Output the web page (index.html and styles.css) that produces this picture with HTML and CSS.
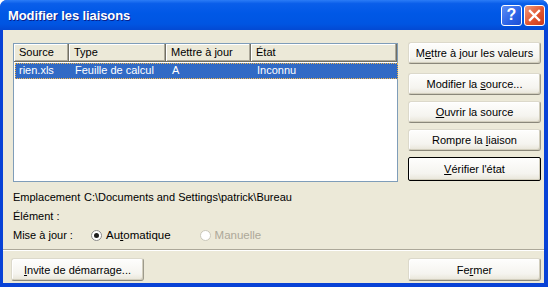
FILE: index.html
```html
<!DOCTYPE html>
<html lang="fr">
<head>
    <meta charset="UTF-8">
    <title>Modifier les liaisons</title>
    <link rel="stylesheet" href="styles.css">
</head>
<body>
<div class="window">
    <div class="titlebar">
        <span class="title">Modifier les liaisons</span>
        <div class="controls">
            <span class="ctl help">?</span>
            <span class="ctl close">
                <svg width="13" height="13" viewBox="0 0 13 13"><path d="M2 2 L11 11 M11 2 L2 11" stroke="#fff" stroke-width="2.4" stroke-linecap="square"/></svg>
            </span>
        </div>
    </div>
    <div class="client">
        <div class="top">
            <div class="list">
                <div class="list-head">
                    <span class="col c1">Source</span>
                    <span class="col c2">Type</span>
                    <span class="col c3">Mettre à jour</span>
                    <span class="col c4">État</span>
                </div>
                <div class="row selected">
                    <span class="cell c1">rien.xls</span>
                    <span class="cell c2">Feuille de calcul</span>
                    <span class="cell c3">A</span>
                    <span class="cell c4">Inconnu</span>
                </div>
            </div>
            <div class="side">
                <button class="btn first">M<u>e</u>ttre à jour les valeurs</button>
                <button class="btn">Modifier la <u>s</u>ource...</button>
                <button class="btn"><u>O</u>uvrir la source</button>
                <button class="btn">Rompre la <u>l</u>iaison</button>
                <button class="btn default"><u>V</u>érifier l'état</button>
            </div>
        </div>
        <div class="info">
            <div class="line"><span class="label">Emplacement</span><span>C:\Documents and Settings\patrick\Bureau</span></div>
            <div class="line"><span class="label">Élément :</span></div>
            <div class="line">
                <span class="label">Mise à jour :</span>
                <span class="radio on"></span><span class="opt">Au<u>t</u>omatique</span>
                <span class="radio off"></span><span class="opt dim">Manuelle</span>
            </div>
        </div>
        <div class="sep"></div>
        <div class="bottom">
            <button class="btn"><u>I</u>nvite de démarrage...</button>
            <button class="btn">Fe<u>r</u>mer</button>
        </div>
    </div>
</div>
</body>
</html>
```

FILE: styles.css
```css
body {
    margin: 0;
    background: #fff;
    font-family: 'Liberation Sans', Arial, sans-serif;
    font-size: 11px;
    color: #000;
}
.window {
    width: 548px;
    height: 287px;
    background: #0842d6;
    border-radius: 7px 7px 0 0;
    display: flex;
    flex-direction: column;
    box-sizing: border-box;
    padding: 0 4px 4px 3px;
}
.titlebar {
    height: 30px;
    margin: 0 -4px 0 -3px;
    padding: 0 3px 0 8px;
    border-radius: 7px 7px 0 0;
    background: linear-gradient(#2b7cf6 0%, #0a5eea 12%, #0058e6 45%, #0055e2 80%, #0349d3 100%);
    display: flex;
    align-items: center;
    justify-content: space-between;
}
.title {
    color: #fff;
    font-weight: bold;
    font-size: 13px;
    text-shadow: 1px 1px 0 #0a1f8a;
    letter-spacing: -0.1px;
}
.controls {
    display: flex;
    gap: 2px;
}
.ctl {
    width: 19px;
    height: 19px;
    border: 1px solid #fff;
    border-radius: 3px;
    display: flex;
    align-items: center;
    justify-content: center;
}
.help {
    background: linear-gradient(135deg, #5d8ef5, #2a62e6 60%, #1d4fd4);
    color: #fff;
    font: bold 16px 'Liberation Sans', Arial, sans-serif;
}
.close {
    background: linear-gradient(135deg, #f09a7e, #e1552f 55%, #c9391a);
}
.client {
    flex: 1;
    background: #ece9d8;
    padding: 13px 3px 0 10px;
    display: flex;
    flex-direction: column;
}
.top {
    display: flex;
    gap: 10px;
}
.list {
    width: 385px;
    height: 139px;
    background: #fff;
    border: 1px solid #7f9db9;
    box-sizing: border-box;
}
.list-head {
    display: flex;
    height: 17px;
    background: #ece9d8;
    border-bottom: 1px solid #716f64;
    box-shadow: inset 0 -1px 0 #aca899, inset 1px 1px 0 #fff;
}
.col {
    box-sizing: border-box;
    padding: 2px 0 0 5px;
    border-right: 1px solid #716f64;
    box-shadow: inset -1px 0 0 #aca899, inset 1px 0 0 #fff;
    white-space: nowrap;
}
.c1 { width: 55px; }
.c2 { width: 97px; }
.c3 { width: 85px; }
.c4 { flex: 1; }
.row {
    display: flex;
    height: 16px;
    margin: 1px 0 0 1px;
    width: 383px;
    box-sizing: border-box;
}
.cell {
    box-sizing: border-box;
    padding: 1px 0 0 5px;
    white-space: nowrap;
}
.row .c1 { padding-left: 4px; }
.selected {
    background: #316ac5;
    color: #fff;
    outline: 1px dotted #f2b64a;
    outline-offset: -1px;
}
.side {
    display: flex;
    flex-direction: column;
    gap: 6px;
    width: 133px;
    margin-top: -1px;
}
.side .first {
    margin-bottom: 3px;
}
.btn {
    font-family: 'Liberation Sans', Arial, sans-serif;
    font-size: 11px;
    color: #000;
    height: 23px;
    width: 133px;
    background: linear-gradient(#fefefd, #f5f4ef 70%, #e8e5d8);
    border: 1px solid #d5d2c4;
    border-color: #dcd9cb #9d9a8c #8a877a #dcd9cb;
    box-shadow: inset -1px -1px 0 #d2cebd, inset 1px 1px 0 #fff;
    border-radius: 3px;
    padding: 0;
}
.side .btn {
    height: 22px;
}
.btn.default {
    border: 1px solid #000;
    border-radius: 2px;
    height: 24px;
}
.info {
    margin-top: 8px;
    display: flex;
    flex-direction: column;
    gap: 5px;
}
.line {
    display: flex;
    align-items: center;
    height: 14px;
}
.label {
    width: 69px;
    flex-shrink: 0;
}
.line .label + span:not(.radio) {
    margin-left: 2px;
}
.radio {
    width: 11px;
    height: 11px;
    border-radius: 50%;
    border: 1px solid #8a8a8a;
    background: #fff;
    box-sizing: border-box;
    margin: 0 4px 0 9px;
    position: relative;
}
.radio.on::after {
    content: '';
    position: absolute;
    left: 2px;
    top: 2px;
    width: 5px;
    height: 5px;
    border-radius: 50%;
    background: #1e1e1e;
}
.radio.off {
    border-color: #cac8bb;
    margin-left: 29px;
}
.opt {
    font-size: 11.5px;
}
.dim {
    color: #aca899;
}
.sep {
    margin: 7px -3px 0 -10px;
    border-top: 1px solid #aca899;
    border-bottom: 1px solid #fff;
}
.bottom {
    display: flex;
    justify-content: space-between;
    padding-top: 7px;
    margin-left: -2px;
}
```
